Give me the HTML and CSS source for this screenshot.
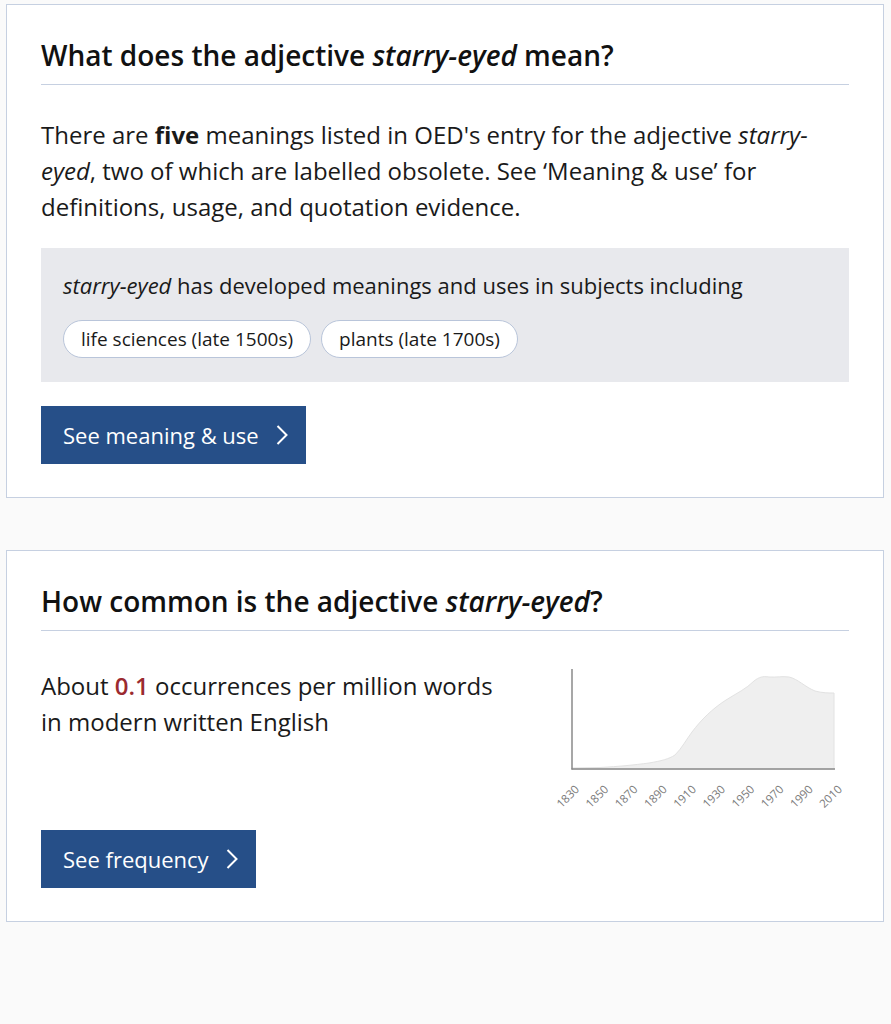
FILE: index.html
```html
<!DOCTYPE html>
<html lang="en">
<head>
<meta charset="utf-8">
<title>starry-eyed</title>
<link rel="stylesheet" href="styles.css">
</head>
<body>
<main class="page">
  <section class="card">
    <h2 class="card-title">What does the adjective <em>starry-eyed</em> mean?</h2>
    <p class="lead">There are <strong>five</strong> meanings listed in OED's entry for the adjective <em>starry-eyed</em>, two of which are labelled obsolete. See ‘Meaning &amp; use’ for definitions, usage, and quotation evidence.</p>
    <div class="subjects">
      <p class="subjects-text"><em>starry-eyed</em> has developed meanings and uses in subjects including</p>
      <div class="pills">
        <span class="pill">life sciences (late 1500s)</span>
        <span class="pill">plants (late 1700s)</span>
      </div>
    </div>
    <a class="btn" href="#">See meaning &amp; use
      <svg class="chev" width="12" height="20" viewBox="0 0 12 20"><polyline points="1.5,1 10.5,10 1.5,19" fill="none" stroke="#fff" stroke-width="2"/></svg>
    </a>
  </section>

  <section class="card">
    <h2 class="card-title">How common is the adjective <em>starry-eyed</em>?</h2>
    <div class="freq">
      <p class="freq-text">About <span class="num">0.1</span> occurrences per million words in modern written English</p>
      <svg class="chart" width="300" height="150" viewBox="0 2 300 150">
        <path d="M23,102 L51,101.5 C70,100.5 85,99 100,97 C112,95 120,93 126,89 C133,82 137,74 143,66 C152,54 163,43 177,34 C188,27 197,23 205,15 C210,11 214,10 220,11 C228,11.5 233,10 240,11 C249,13 256,21 266,25 C273,27 280,27 285,27 L285,103 L23,103 Z" fill="#efefef" stroke="#e2e2e2" stroke-width="1"/>
        <line x1="23" y1="3" x2="23" y2="103.5" stroke="#8a8a8a" stroke-width="1.5"/>
        <line x1="22.5" y1="103" x2="286" y2="103" stroke="#8a8a8a" stroke-width="1.5"/>
        <g class="ticks">
          <text x="31" y="124" transform="rotate(-45 31 124)">1830</text>
          <text x="60.2" y="124" transform="rotate(-45 60.2 124)">1850</text>
          <text x="89.4" y="124" transform="rotate(-45 89.4 124)">1870</text>
          <text x="118.6" y="124" transform="rotate(-45 118.6 124)">1890</text>
          <text x="147.8" y="124" transform="rotate(-45 147.8 124)">1910</text>
          <text x="177" y="124" transform="rotate(-45 177 124)">1930</text>
          <text x="206.2" y="124" transform="rotate(-45 206.2 124)">1950</text>
          <text x="235.4" y="124" transform="rotate(-45 235.4 124)">1970</text>
          <text x="264.6" y="124" transform="rotate(-45 264.6 124)">1990</text>
          <text x="293.8" y="124" transform="rotate(-45 293.8 124)">2010</text>
        </g>
      </svg>
    </div>
    <a class="btn btn-freq" href="#">See frequency
      <svg class="chev" width="12" height="20" viewBox="0 0 12 20"><polyline points="1.5,1 10.5,10 1.5,19" fill="none" stroke="#fff" stroke-width="2"/></svg>
    </a>
  </section>
</main>
</body>
</html>
```

FILE: styles.css
```css
html, body {
  margin: 0;
  padding: 0;
  background: #fafafa;
}

body {
  font-family: "Open Sans", "Noto Sans", "Liberation Sans", sans-serif;
  color: #1a1a1a;
}

.page {
  padding: 4px 7px 40px 6px;
  display: flex;
  flex-direction: column;
  gap: 52px;
}

.card {
  background: #fff;
  border: 1px solid #c6d0e1;
  padding: 32px 34px 33px 34px;
  display: flex;
  flex-direction: column;
}

.card-title {
  margin: 0;
  font-size: 28px;
  line-height: 36px;
  font-weight: 600;
  color: #111;
  padding-bottom: 11px;
  border-bottom: 1px solid #c6d0e1;
}

.card-title em {
  font-style: italic;
}

.lead {
  margin: 32px 0 0 0;
  font-size: 24px;
  line-height: 36px;
}

.lead strong {
  font-weight: 700;
}

.subjects {
  margin-top: 23px;
  background: #e8e9ed;
  padding: 19px 22px 24px 22px;
}

.subjects-text {
  margin: 0;
  font-size: 22px;
  line-height: 36px;
}

.pills {
  display: flex;
  gap: 10px;
  margin-top: 17px;
}

.pill {
  display: inline-flex;
  align-items: center;
  height: 36px;
  padding: 0 17px;
  border: 1px solid #b9c5da;
  border-radius: 19px;
  background: #fff;
  font-size: 19px;
}

.btn {
  margin-top: 24px;
  align-self: flex-start;
  display: inline-flex;
  align-items: center;
  gap: 17px;
  height: 58px;
  padding: 0 18px 0 22px;
  background: #264f88;
  color: #fff;
  font-size: 22px;
  text-decoration: none;
}

.chev {
  display: block;
}

.freq {
  margin-top: 37px;
  display: flex;
  justify-content: space-between;
  align-items: flex-start;
}

.freq-text {
  margin: 0;
  width: 470px;
  font-size: 24px;
  line-height: 36px;
}

.num {
  color: #9b2a30;
  font-weight: 600;
}

.chart {
  display: block;
}

.ticks text {
  font-family: "Open Sans", "Noto Sans", sans-serif;
  font-size: 11.5px;
  fill: #7a7a7a;
  text-anchor: end;
}

.btn-freq {
  margin-top: 12px;
}
```
